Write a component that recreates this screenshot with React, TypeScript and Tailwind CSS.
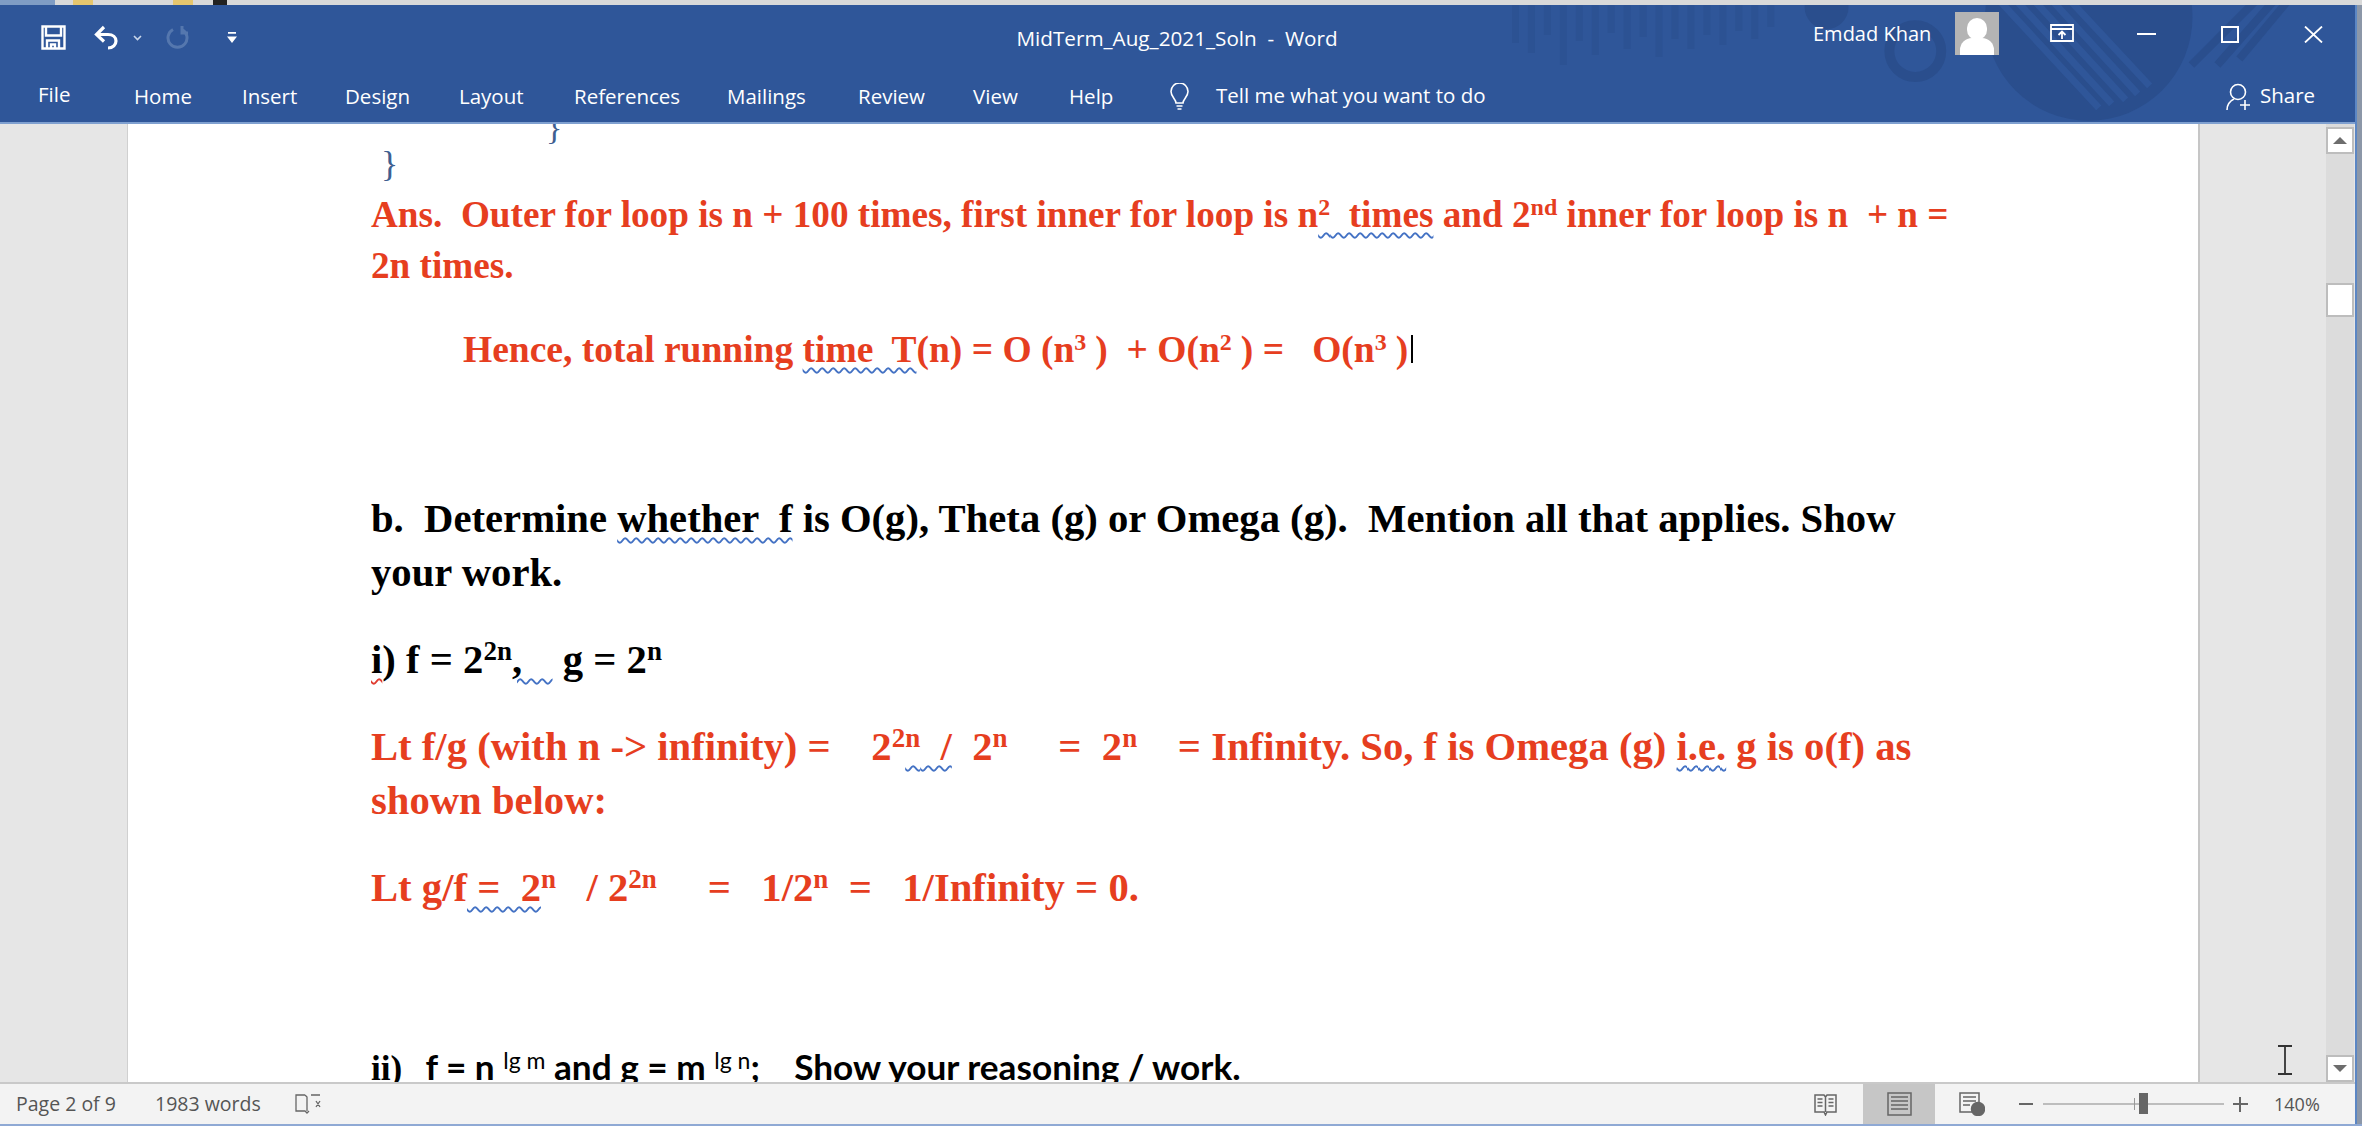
const serif = "font-['Liberation_Serif',serif] font-bold whitespace-pre";
const ui = "font-['Open_Sans',sans-serif]";
const squiggle = "underline decoration-wavy decoration-[#4472c4] decoration-[1.5px] underline-offset-[5px]";

const tabs = [
    { label: 'Home', w: 'w-[108px]' },
    { label: 'Insert', w: 'w-[103px]' },
    { label: 'Design', w: 'w-[114px]' },
    { label: 'Layout', w: 'w-[115px]' },
    { label: 'References', w: 'w-[153px]' },
    { label: 'Mailings', w: 'w-[131px]' },
    { label: 'Review', w: 'w-[115px]' },
    { label: 'View', w: 'w-[96px]' },
    { label: 'Help', w: 'w-[101px]' },
];

const TitleArt = () => (
    <svg className="absolute inset-0 h-full w-full" viewBox="0 0 2362 117" fill="none" aria-hidden="true">
        <g stroke="#2c5293" strokeWidth="7">
            <path d="M1520 0v38M1536 0v48M1552 0v30M1568 0v60M1584 0v36M1600 0v50M1616 0v28M1632 0v44M1648 0v32M1664 0v52M1680 0v34M1696 0v44M1712 0v30M1728 0v40M1744 0v26M1760 0v34M1776 0v22" />
        </g>
        <circle cx="2095" cy="12" r="104" fill="#2a4e8d" />
        <g stroke="#2f5699" strokeWidth="7">
            <path d="M2005-5l100 108M2022-5l96 104M2040-5l92 100M2058-5l86 94M2076-5l80 86" />
        </g>
        <circle cx="1921" cy="46" r="26" stroke="#2a4e8d" strokeWidth="10" />
        <circle cx="1832" cy="2" r="22" fill="#2a4e8d" />
        <path d="M2198 60l70-70M2224 60l58-66M2246 54l50-60" stroke="#2a4e8d" strokeWidth="8" />
    </svg>
);

const WindowBar = () => (
    <header className="relative h-[117px] shrink-0 overflow-hidden bg-[#2f5699] text-white">
        <TitleArt />
        <div className="relative flex h-[69px] items-start">
            <div className="flex w-[1016px] items-center pl-[41px] pt-[20px]">
                <svg className="h-[25px] w-[25px]" viewBox="0 0 25 25" fill="none" stroke="white" strokeWidth="2.4">
                    <path d="M1.500 1.500h22v22h-22zM5 1.500v9h15v-9M6 23.500v-8h12v8M10 23.500v-4h4v4" />
                </svg>
                <svg className="ml-[28px] h-[25px] w-[26px]" viewBox="0 0 26 25" fill="none" stroke="white" strokeWidth="3.2">
                    <path d="M10 2L2.500 9.500l7.500 7M3 9.500h11c5 0 8 3 8 6.500s-3 7-8 7" />
                </svg>
                <svg className="ml-[13px] h-[6px] w-[9px]" viewBox="0 0 9 6" fill="none" stroke="#c9d6ea" strokeWidth="1.600">
                    <path d="M1 1l3.500 3.500L8 1" />
                </svg>
                <svg className="ml-[24px] h-[25px] w-[23px]" viewBox="0 0 23 25" fill="none" stroke="#5577ae" strokeWidth="3">
                    <path d="M7 4.500a9.500 9.500 0 1 0 9 0M16 1v7h6" />
                </svg>
                <svg className="ml-[38px] h-[11px] w-[10px]" viewBox="0 0 10 11" fill="white">
                    <path d="M1 0h8v1.800H1zM0 4.500h10L5 11z" />
                </svg>
            </div>
            <div className={`${ui} w-[322px] whitespace-pre pt-[19px] text-center text-[20.7px] leading-[28px]`}>MidTerm_Aug_2021_Soln  -  Word</div>
            <div className={`${ui} ml-[475px] w-[122px] pt-[15px] text-[20px] leading-[28px]`}>Emdad Khan</div>
            <div className="relative ml-[20px] mt-[7px] h-[43px] w-[44px] overflow-hidden bg-[#b4b4b4]">
                <div className="absolute left-[12px] top-[6px] h-[22px] w-[20px] rounded-full bg-white" />
                <div className="absolute left-[5px] top-[26px] h-[24px] w-[34px] rounded-t-[12px] bg-white" />
            </div>
            <svg className="ml-[51px] mt-[19px] h-[18px] w-[24px]" viewBox="0 0 24 18" fill="none" stroke="white" strokeWidth="1.800">
                <path d="M1 1h22v16H1zM1 5h22M12 15V8M8.500 11L12 7.500l3.500 3.500" />
            </svg>
            <div className="ml-[63px] mt-[28px] h-[2px] w-[19px] bg-white" />
            <div className="ml-[65px] mt-[21px] h-[17px] w-[18px] border-2 border-white" />
            <svg className="ml-[65px] mt-[21px] h-[17px] w-[19px]" viewBox="0 0 19 17" fill="none" stroke="white" strokeWidth="1.800">
                <path d="M1 .5l17 16M18 .5l-17 16" />
            </svg>
        </div>
        <nav className={`${ui} relative flex h-[45px] items-center text-[20.5px]`}>
            <div className="w-[134px] pb-[4px] pl-[38px]">File</div>
            {tabs.map((tab) => (
                <div key={tab.label} className={tab.w}>{tab.label}</div>
            ))}
            <svg className="h-[28px] w-[19px]" viewBox="0 0 19 28" fill="none" stroke="white" strokeWidth="1.600">
                <path d="M6 20c0-4-5-6-5-11.500a8.500 8.500 0 0 1 17 0C18 14 13 16 13 20zM6.500 23h6M7.500 26h4" />
            </svg>
            <div className="ml-[27px] w-[272px] whitespace-nowrap pb-[2px]">Tell me what you want to do</div>
            <svg className="ml-[738px] h-[28px] w-[26px]" viewBox="0 0 26 28" fill="none" stroke="white" strokeWidth="1.600">
                <circle cx="12" cy="9" r="7.500" />
                <path d="M1 27c0-6 3-9 7-11M19 17v10M14 22h10" />
            </svg>
            <div className="ml-[8px] pb-[2px]">Share</div>
        </nav>
    </header>
);

const Document = () => (
    <div className="min-w-0 flex-1 overflow-hidden bg-white pl-[243px]">
        <div className="relative h-[24px] pl-[175px] font-['Liberation_Serif',serif] text-[34px] leading-[24px] text-[#3f5f91]"><span className="relative top-[-8px]">{'}'}</span></div>
        <div className="mt-[-4px] h-[40px] pl-[10px] font-['Liberation_Serif',serif] text-[36px] leading-[40px] text-[#3f5f91]">{'}'}</div>
        <div className={`${serif} mt-[6px] h-[50px] text-[37.2px] leading-[50px] text-[#e63e1f]`}>
            Ans.  Outer for loop is n + 100 times, first inner for loop is n<span className={squiggle}><sup className="text-[24px]">2</sup>  times</span> and 2<sup className="text-[24px]">nd</sup> inner for loop is n  + n =
        </div>
        <div className={`${serif} h-[52px] text-[37.2px] leading-[52px] text-[#e63e1f]`}>2n times.</div>
        <div className={`${serif} mt-[32px] h-[52px] pl-[92px] text-[37.5px] leading-[52px] text-[#e63e1f]`}>
            Hence, total running <span className={squiggle}>time  T</span>(n) = O (n<sup className="pr-[3px] text-[24px]">3 </sup>)  + O(n<sup className="pr-[3px] text-[24px]">2 </sup>) =   O(n<sup className="pr-[3px] text-[24px]">3 </sup>)<span className="relative top-[-4px] ml-[3px] inline-block h-[28px] w-[1.5px] bg-black align-middle" />
        </div>
        <div className={`${serif} mt-[116px] h-[54px] text-[40.66px] leading-[54px] text-black`}>
            b.  Determine <span className={squiggle}>whether  f</span> is O(g), Theta (g) or Omega (g).  Mention all that applies. Show
        </div>
        <div className={`${serif} h-[54px] text-[40.66px] leading-[54px] text-black`}>your work.</div>
        <div className={`${serif} mt-[33px] h-[54px] text-[40.66px] leading-[54px] text-black`}>
            <span className="underline decoration-wavy decoration-[#e03c31] decoration-[1.5px] underline-offset-[5px]">i</span>) f = 2<sup className="text-[27px]">2n</sup><span className={squiggle}>,   </span> g = 2<sup className="text-[27px]">n</sup>
        </div>
        <div className={`${serif} mt-[33px] h-[54px] text-[40.66px] leading-[54px] text-[#e63e1f]`}>
            Lt f/g (with n -&gt; infinity) =    2<sup className="text-[27px]">2</sup><span className={squiggle}><sup className="text-[27px]">n</sup>  /</span>  2<sup className="text-[27px]">n</sup>     =  2<sup className="text-[27px]">n</sup>    = Infinity. So, f is Omega (g) <span className={squiggle}>i.e.</span> g is o(f) as
        </div>
        <div className={`${serif} h-[54px] text-[40.66px] leading-[54px] text-[#e63e1f]`}>shown below:</div>
        <div className={`${serif} mt-[33px] h-[54px] text-[40.66px] leading-[54px] text-[#e63e1f]`}>
            Lt g/f<span className={squiggle}> =  2</span><sup className="text-[27px]">n</sup>   / 2<sup className="text-[27px]">2n</sup>     =   1/2<sup className="text-[27px]">n</sup>  =   1/Infinity = 0.
        </div>
        <div className="mt-[124px] h-[54px] whitespace-pre font-['Lato',sans-serif] text-[35.2px] font-bold leading-[54px] text-black">
            <span className={serif}>ii)</span>  <span className="ml-[6px]">f = n </span><sup className="text-[23px] font-normal">lg m</sup> and g = m <sup className="text-[23px] font-normal">lg n</sup>;    Show your reasoning / work.
        </div>
    </div>
);

const Gutter = () => (
    <div className="relative flex w-[157px] shrink-0 justify-end border-l-2 border-[#c6c6c6] bg-[#e6e6e6] pr-[1px]">
        <div className="flex w-[28px] flex-col bg-[#dcdcdc]">
            <div className="mt-[3px] flex h-[27px] items-center justify-center border-2 border-[#bdbdbd] bg-white">
                <div className="h-0 w-0 border-x-[7px] border-b-[7px] border-x-transparent border-b-[#6d6d6d]" />
            </div>
            <div className="mt-[129px] h-[34px] border-2 border-[#bdbdbd] bg-white" />
            <div className="flex-1" />
            <div className="flex h-[27px] items-center justify-center border-2 border-[#bdbdbd] bg-white">
                <div className="h-0 w-0 border-x-[7px] border-t-[7px] border-x-transparent border-t-[#6d6d6d]" />
            </div>
        </div>
        {/* mouse cursor from the recording */}
        <svg className="absolute bottom-[7px] left-[78px] h-[30px] w-[14px]" viewBox="0 0 14 30" fill="none" stroke="#333" strokeWidth="1.800">
            <path d="M0 1h14M0 29h14M7 1v28" />
        </svg>
    </div>
);

const StatusBar = () => (
    <footer className={`${ui} flex h-[42px] shrink-0 items-center border-t-2 border-[#c9c9c9] bg-[#f3f3f3] text-[18px] text-[#555]`}>
        <div className="w-[138px] whitespace-nowrap pl-[16px] text-[19.5px]">Page 2 of 9</div>
        <div className="w-[157px] whitespace-nowrap pl-[17px] text-[19.5px]">1983 words</div>
        <svg className="h-[22px] w-[27px]" viewBox="0 0 27 22" fill="none" stroke="#666" strokeWidth="1.300">
            <path d="M10 2H1v16h9l2 2 2-2M10 2l2 2v14M16 2h9M21 8l4 6M25 8l-4 6" />
        </svg>
        <svg className="ml-[1492px] h-[23px] w-[23px]" viewBox="0 0 23 23" fill="none" stroke="#666" strokeWidth="1.500">
            <path d="M1 2h9l1.500 2L13 2h9v17h-9l-1.500 3L10 19H1zM11.500 4v15M3.500 6h5M3.500 9.500h5M3.500 13h5M14.500 6h5M14.500 9.500h5M14.500 13h5" />
        </svg>
        <div className="ml-[26px] flex h-[40px] w-[72px] items-center justify-center bg-[#c6c6c6]">
            <svg className="h-[24px] w-[25px]" viewBox="0 0 25 24" fill="none" stroke="#666" strokeWidth="1.500">
                <path d="M1 1h23v22H1zM4 5h17M4 9h17M4 13h17M4 17h17" />
            </svg>
        </div>
        <svg className="ml-[24px] h-[24px] w-[26px]" viewBox="0 0 26 24" fill="none" stroke="#666" strokeWidth="1.500">
            <path d="M14 20H1V1h19v10M4 5h13M4 9h13M4 13h7" />
            <circle cx="19" cy="17" r="6.500" fill="#666" />
        </svg>
        <div className="ml-[34px] h-[2px] w-[14px] bg-[#666]" />
        <div className="relative ml-[10px] h-[2px] w-[181px] bg-[#bdbdbd]">
            <div className="absolute left-[91px] top-[-5px] h-[12px] w-[1px] bg-[#999]" />
            <div className="absolute left-[96px] top-[-10px] h-[21px] w-[9px] bg-[#666]" />
        </div>
        <div className="relative ml-[9px] h-[15px] w-[15px]">
            <div className="absolute left-0 top-[6px] h-[2px] w-[15px] bg-[#666]" />
            <div className="absolute left-[6px] top-0 h-[15px] w-[2px] bg-[#666]" />
        </div>
        <div className="ml-[26px]">140%</div>
    </footer>
);

const App = () => {
    return (
        <div className="flex h-[1126px] w-[2362px] flex-col overflow-hidden bg-[#8c97a8]">
            <div className="flex h-[5px] shrink-0 bg-[#d9d9d9]">
                <div className="w-[55px] bg-[#7f9cc4]" />
                <div className="ml-[18px] w-[20px] bg-[#e6c66e]" />
                <div className="ml-[80px] w-[20px] bg-[#e6c66e]" />
                <div className="ml-[20px] w-[14px] bg-[#222]" />
            </div>
            <div className="mr-[5px] flex min-h-0 flex-1 flex-col border-r-2 border-[#5b86c4]">
                <WindowBar />
                <main className="flex min-h-0 flex-1 border-t-2 border-[#7fa0d0]">
                    <div className="w-[128px] shrink-0 border-r border-[#d0d0d0] bg-[#e6e6e6]" />
                    <Document />
                    <Gutter />
                </main>
                <StatusBar />
            </div>
            <div className="h-[2px] shrink-0 bg-[#8fa9d4]" />
        </div>
    );
};

export default App;
